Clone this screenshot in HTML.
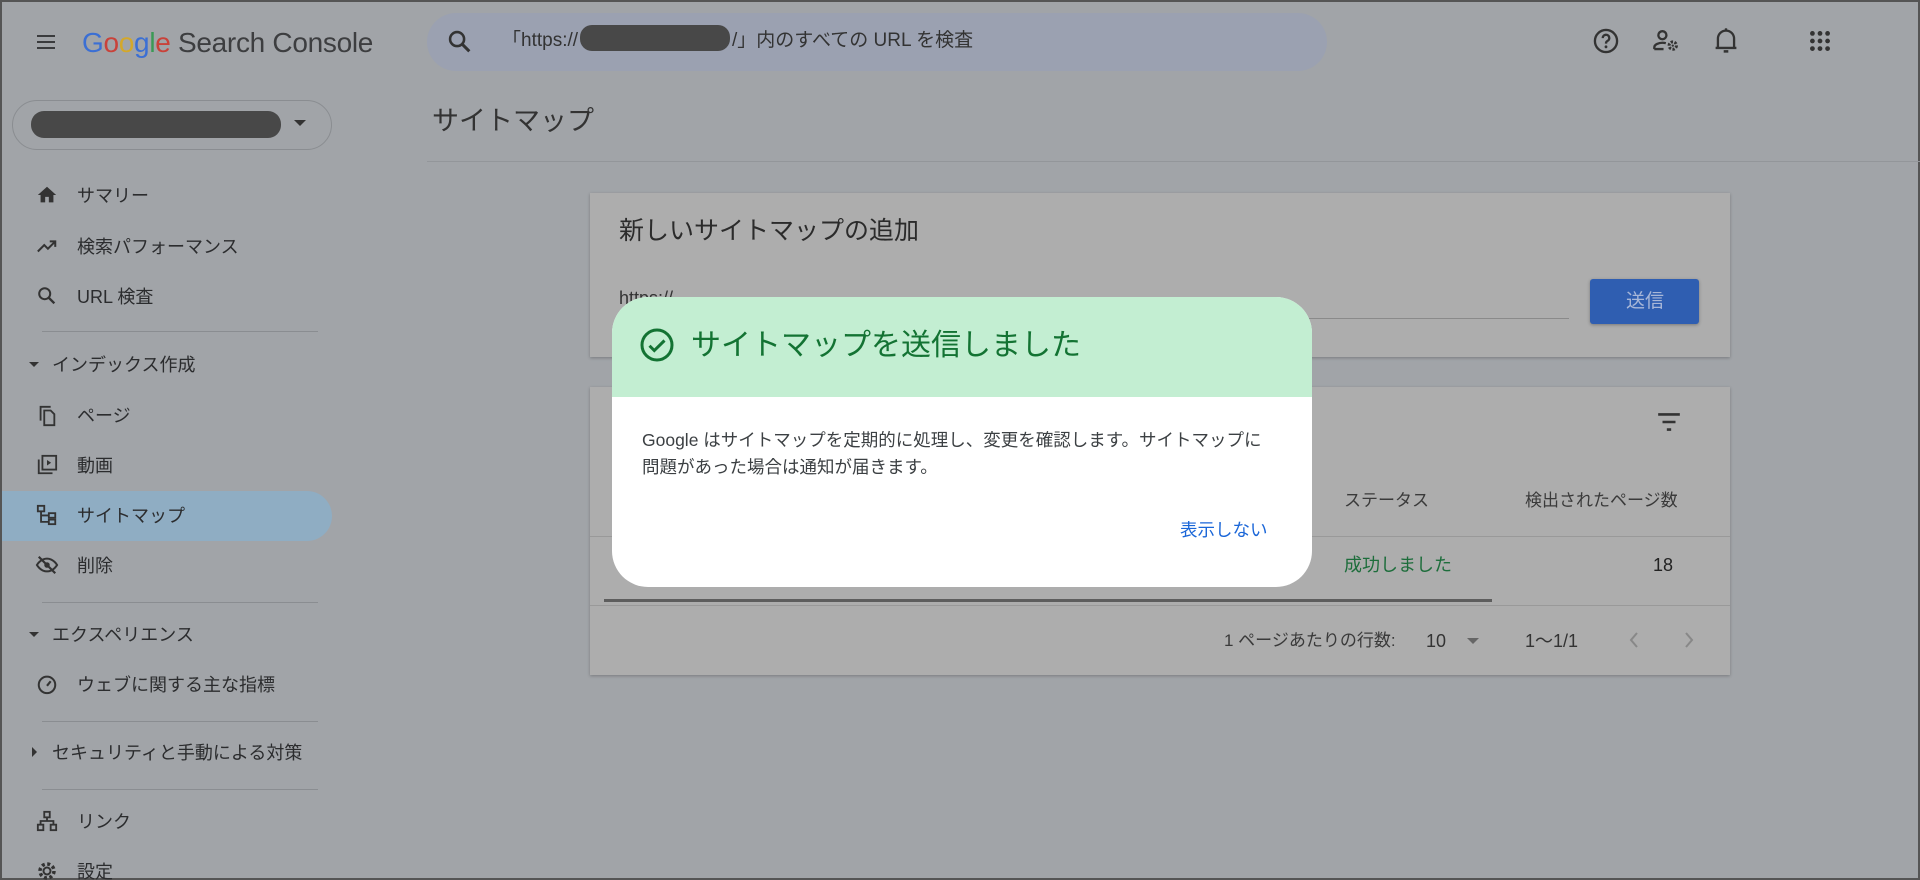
<!DOCTYPE html>
<html><head><meta charset="utf-8">
<style>
*{box-sizing:border-box;margin:0;padding:0}
html,body{width:1920px;height:880px;overflow:hidden}
body{background:#a1a4a8;font-family:"Liberation Sans","Noto Sans CJK JP",sans-serif;color:#2b2c2e;position:relative;border:2px solid #555;}
.a{position:absolute}
.t{position:absolute;white-space:nowrap;line-height:1}
.nav{font-size:18px;color:#2b2c2e}
.sep{position:absolute;left:40px;width:276px;height:1px;background:#8a8d91}
svg{position:absolute}
</style></head><body>
<svg style="left:32px;top:28px" width="24" height="24" viewBox="0 0 24 24"><path d="M3 6h18M3 12h18M3 18h18" stroke="#3a3b3d" stroke-width="2"/></svg>
<div class="t" style="left:80px;top:27px;font-size:28px;letter-spacing:-0.3px"><span style="color:#3b6fd4">G</span><span style="color:#c9423a">o</span><span style="color:#d4a82a">o</span><span style="color:#3b6fd4">g</span><span style="color:#3a9a55">l</span><span style="color:#c9423a">e</span><span style="color:#3d3e40"> Search Console</span></div>
<div class="a" style="left:425px;top:11px;width:900px;height:58px;border-radius:29px;background:#9ba1b1"></div>
<svg style="left:444px;top:26px" width="28" height="28" viewBox="0 0 24 24"><circle cx="9.5" cy="9.5" r="6" fill="none" stroke="#333" stroke-width="2.2"/><path d="M14 14l6 6" stroke="#333" stroke-width="2.6"/></svg>
<div class="t" style="left:500px;top:29px;font-size:19px;color:#333">「https://<span style="display:inline-block;width:150px;height:26px;border-radius:12px;background:#484848;vertical-align:middle;margin:-6px 2px 0"></span>/」内のすべての URL を検査</div>
<svg style="left:1590px;top:25px" width="28" height="28" viewBox="0 0 24 24"><circle cx="12" cy="12" r="9.5" fill="none" stroke="#333" stroke-width="2"/><path d="M9.2 9.5a2.8 2.8 0 1 1 4 2.5c-1 .5-1.2 1.2-1.2 2.2" fill="none" stroke="#333" stroke-width="2"/><circle cx="12" cy="17" r="1.2" fill="#333"/></svg>
<svg style="left:1650px;top:25px" width="30" height="28" viewBox="0 0 26 24"><circle cx="9" cy="7" r="3.5" fill="none" stroke="#333" stroke-width="2"/><path d="M2 19v-1.5c0-2.5 4-4 7-4 1 0 2 .1 3 .4M2 19h8" fill="none" stroke="#333" stroke-width="2"/><circle cx="18" cy="16" r="3.2" fill="none" stroke="#333" stroke-width="2.6" stroke-dasharray="2 1.3"/><circle cx="18" cy="16" r="1" fill="#333"/></svg>
<svg style="left:1710px;top:24px" width="28" height="30" viewBox="0 0 24 26"><path d="M5 19V11a7 7 0 0 1 14 0v8M3 19h18" fill="none" stroke="#333" stroke-width="2"/><path d="M12 2v2" stroke="#333" stroke-width="2"/><path d="M10 22h4" stroke="#333" stroke-width="2.2"/></svg>
<svg style="left:1805px;top:26px" width="26" height="26" viewBox="0 0 24 24" fill="#333"><circle cx="5" cy="5" r="2.2"/><circle cx="12" cy="5" r="2.2"/><circle cx="19" cy="5" r="2.2"/><circle cx="5" cy="12" r="2.2"/><circle cx="12" cy="12" r="2.2"/><circle cx="19" cy="12" r="2.2"/><circle cx="5" cy="19" r="2.2"/><circle cx="12" cy="19" r="2.2"/><circle cx="19" cy="19" r="2.2"/></svg>
<div class="a" style="left:10px;top:98px;width:320px;height:50px;border-radius:25px;border:1px solid #8a8d91"></div>
<div class="a" style="left:29px;top:109px;width:250px;height:27px;border-radius:13px;background:#484848"></div>
<div class="a" style="left:292px;top:118px;border-left:6px solid transparent;border-right:6px solid transparent;border-top:6px solid #333"></div>
<div class="a" style="left:0;top:489px;width:330px;height:50px;border-radius:0 25px 25px 0;background:#8fadc3"></div>
<svg style="left:34px;top:182px" width="22" height="22" viewBox="0 0 24 24"><path d="M10 20v-6h4v6h5v-8h3L12 3 2 12h3v8z" fill="#333"/></svg>
<div class="t nav" style="left:75px;top:185px">サマリー</div>
<svg style="left:34px;top:233px" width="22" height="22" viewBox="0 0 24 24"><path d="M2 18l7-7 4 4 8-8M15 7h6v6" fill="none" stroke="#333" stroke-width="2.2"/></svg>
<div class="t nav" style="left:75px;top:236px">検索パフォーマンス</div>
<svg style="left:34px;top:283px" width="22" height="22" viewBox="0 0 24 24"><circle cx="9.5" cy="9.5" r="6" fill="none" stroke="#333" stroke-width="2.2"/><path d="M14 14l6 6" stroke="#333" stroke-width="2.6"/></svg>
<div class="t nav" style="left:75px;top:286px">URL 検査</div>
<div class="sep" style="top:329px"></div>
<div class="a" style="left:27px;top:360px;border-left:5px solid transparent;border-right:5px solid transparent;border-top:5px solid #333"></div>
<div class="t nav" style="left:50px;top:354px">インデックス作成</div>
<svg style="left:34px;top:402px" width="22" height="24" viewBox="0 0 24 24"><path d="M16 2H5v15M9 6h7l4 4v12H9z" fill="none" stroke="#333" stroke-width="2"/></svg>
<div class="t nav" style="left:75px;top:405px">ページ</div>
<svg style="left:34px;top:452px" width="22" height="22" viewBox="0 0 24 24"><path d="M3 6v15h15" fill="none" stroke="#333" stroke-width="2"/><rect x="7" y="2" width="15" height="15" fill="none" stroke="#333" stroke-width="2"/><path d="M12 6.5v6l4.5-3z" fill="#333"/></svg>
<div class="t nav" style="left:75px;top:455px">動画</div>
<svg style="left:34px;top:502px" width="22" height="22" viewBox="0 0 24 24" fill="none" stroke="#333" stroke-width="2"><rect x="2" y="2" width="7" height="6"/><rect x="14" y="10" width="7" height="5"/><rect x="14" y="17" width="7" height="5"/><path d="M5.5 8v11.5H14M5.5 12.5H14"/></svg>
<div class="t nav" style="left:75px;top:505px">サイトマップ</div>
<svg style="left:33px;top:552px" width="24" height="22" viewBox="0 0 24 24"><path d="M1 12s4-7 11-7 11 7 11 7-4 7-11 7S1 12 1 12z" fill="none" stroke="#333" stroke-width="2.2"/><circle cx="12" cy="12" r="3" fill="#333"/><path d="M3 3l18 18" stroke="#333" stroke-width="2.4"/></svg>
<div class="t nav" style="left:75px;top:555px">削除</div>
<div class="sep" style="top:600px"></div>
<div class="a" style="left:27px;top:630px;border-left:5px solid transparent;border-right:5px solid transparent;border-top:5px solid #333"></div>
<div class="t nav" style="left:50px;top:624px">エクスペリエンス</div>
<svg style="left:34px;top:671px" width="22" height="22" viewBox="0 0 24 24"><circle cx="12" cy="13" r="9" fill="none" stroke="#333" stroke-width="2.2"/><path d="M12 14l4-5" stroke="#333" stroke-width="2.4"/></svg>
<div class="t nav" style="left:75px;top:674px">ウェブに関する主な指標</div>
<div class="sep" style="top:719px"></div>
<div class="a" style="left:30px;top:745px;border-top:5px solid transparent;border-bottom:5px solid transparent;border-left:5px solid #333"></div>
<div class="t nav" style="left:50px;top:742px">セキュリティと手動による対策</div>
<div class="sep" style="top:787px"></div>
<svg style="left:34px;top:808px" width="22" height="22" viewBox="0 0 24 24" fill="none" stroke="#333" stroke-width="2"><rect x="9" y="2" width="6" height="6"/><rect x="2" y="16" width="6" height="6"/><rect x="16" y="16" width="6" height="6"/><path d="M12 8v4M5 16v-4h14v4"/></svg>
<div class="t nav" style="left:75px;top:811px">リンク</div>
<svg style="left:33px;top:857px" width="24" height="24" viewBox="0 0 24 24"><circle cx="12" cy="12" r="7" fill="none" stroke="#333" stroke-width="3.5" stroke-dasharray="3 2.5"/><circle cx="12" cy="12" r="3.5" fill="none" stroke="#333" stroke-width="2"/></svg>
<div class="t nav" style="left:75px;top:861px">設定</div>
<div class="t" style="left:430px;top:106px;font-size:27px;color:#333">サイトマップ</div>
<div class="a" style="left:425px;top:159px;width:1495px;height:1px;background:#93969a"></div>
<div class="a" style="left:588px;top:191px;width:1140px;height:164px;background:#adadad;box-shadow:0 1px 3px rgba(0,0,0,.25)"></div>
<div class="t" style="left:617px;top:217px;font-size:25px;color:#2b2b2b">新しいサイトマップの追加</div>
<div class="t" style="left:617px;top:287px;font-size:18px;color:#333">https://</div>
<div class="a" style="left:617px;top:316px;width:950px;height:1px;background:#8a8a8a"></div>
<div class="a" style="left:1588px;top:277px;width:109px;height:45px;background:#2f5eb1;border-radius:3px;box-shadow:0 1px 3px rgba(0,0,0,.3)"></div>
<div class="t" style="left:1624px;top:290px;font-size:19px;color:#a8b7d8">送信</div>
<div class="a" style="left:588px;top:385px;width:1140px;height:288px;background:#adadad;box-shadow:0 1px 3px rgba(0,0,0,.25)"></div>
<svg style="left:1654px;top:409px" width="26" height="22" viewBox="0 0 24 20"><path d="M2 3h20M6 10h12M10 17h4" stroke="#333" stroke-width="2.4"/></svg>
<div class="t" style="left:1342px;top:490px;font-size:17px;color:#3a3a3a">ステータス</div>
<div class="t" style="left:1523px;top:490px;font-size:17px;color:#3a3a3a">検出されたページ数</div>
<div class="a" style="left:588px;top:534px;width:1140px;height:1px;background:#999"></div>
<div class="t" style="left:1342px;top:554px;font-size:18px;color:#1d6d3b">成功しました</div>
<div class="t" style="left:1651px;top:554px;font-size:18px;color:#222">18</div>
<div class="a" style="left:602px;top:597px;width:888px;height:3px;background:#5d5d5d"></div>
<div class="a" style="left:588px;top:603px;width:1140px;height:1px;background:#999"></div>
<div class="t" style="left:1222px;top:630px;font-size:17px;color:#3a3a3a">1 ページあたりの行数:</div>
<div class="t" style="left:1424px;top:630px;font-size:18px;color:#333">10</div>
<div class="a" style="left:1465px;top:636px;border-left:6px solid transparent;border-right:6px solid transparent;border-top:6px solid #666"></div>
<div class="t" style="left:1523px;top:630px;font-size:18px;color:#333">1〜1/1</div>
<svg style="left:1622px;top:626px" width="20" height="24" viewBox="0 0 20 24"><path d="M13 5l-6 7 6 7" fill="none" stroke="#888" stroke-width="2"/></svg>
<svg style="left:1677px;top:626px" width="20" height="24" viewBox="0 0 20 24"><path d="M7 5l6 7-6 7" fill="none" stroke="#888" stroke-width="2"/></svg>
<div class="a" style="left:610px;top:295px;width:700px;height:290px;border-radius:36px;background:#fff;overflow:hidden">
 <div class="a" style="left:0;top:0;width:700px;height:100px;background:#c3eed2"></div>
 <svg style="left:27px;top:30px" width="36" height="36" viewBox="0 0 24 24"><circle cx="12" cy="12" r="10" fill="none" stroke="#137333" stroke-width="2"/><path d="M7 12.5l3.2 3.2L17 9" fill="none" stroke="#137333" stroke-width="2"/></svg>
 <div class="t" style="left:79px;top:34px;font-size:30px;color:#137333">サイトマップを送信しました</div>
 <div class="a" style="left:30px;top:130px;width:626px;font-size:17.5px;line-height:27px;color:#3c4043">Google はサイトマップを定期的に処理し、変更を確認します。サイトマップに問題があった場合は通知が届きます。</div>
 <div class="t" style="left:568px;top:225px;font-size:17.5px;color:#1a66d8">表示しない</div>
</div>
</body></html>
